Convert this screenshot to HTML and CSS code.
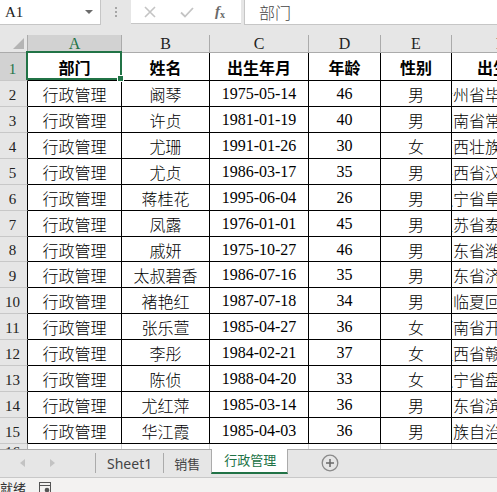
FILE: index.html
```html
<!DOCTYPE html>
<html lang="zh-CN">
<head>
<meta charset="utf-8">
<title>行政管理</title>
<link rel="stylesheet" href="styles.css">
</head>
<body>
<div class="app">
  <div class="formula-bar">
    <div class="namebox"><span class="ref">A1</span><span class="caret"></span></div>
    <div class="splitter"><i></i><i></i><i></i></div>
    <div class="fx-buttons">
      <svg class="btn" width="14" height="14" viewBox="0 0 14 14"><path d="M2 2 L12 12 M12 2 L2 12" stroke="#c4c4c4" stroke-width="1.6" fill="none"/></svg>
      <svg class="btn" width="16" height="14" viewBox="0 0 16 14"><path d="M2 7.5 L6 11.5 L14 3" stroke="#c4c4c4" stroke-width="1.8" fill="none"/></svg>
      <span class="fx"><i>f</i><sub>x</sub></span>
    </div>
    <div class="formula-input">部门</div>
  </div>

  <div class="sheet">
    <div class="grid">
      <div class="corner"><span class="tri"></span></div>
      <div class="colh sel">A</div>
      <div class="colh">B</div>
      <div class="colh">C</div>
      <div class="colh">D</div>
      <div class="colh">E</div>
      <div class="colh">F</div>

      <div class="rowh sel r1">1</div>
      <div class="c r1 b">部门</div><div class="c r1 b">姓名</div><div class="c r1 b">出生年月</div><div class="c r1 b">年龄</div><div class="c r1 b">性别</div><div class="c r1 b f"><span>出生地</span></div>

      <div class="rowh">2</div>
      <div class="c">行政管理</div><div class="c">阚琴</div><div class="c">1975-05-14</div><div class="c">46</div><div class="c">男</div><div class="c f"><span>贵州省毕节市大方</span></div>

      <div class="rowh">3</div>
      <div class="c">行政管理</div><div class="c">许贞</div><div class="c">1981-01-19</div><div class="c">40</div><div class="c">男</div><div class="c f"><span>湖南省常德市汉寿</span></div>

      <div class="rowh">4</div>
      <div class="c">行政管理</div><div class="c">尤珊</div><div class="c">1991-01-26</div><div class="c">30</div><div class="c">女</div><div class="c f"><span>广西壮族自治区南</span></div>

      <div class="rowh">5</div>
      <div class="c">行政管理</div><div class="c">尤贞</div><div class="c">1986-03-17</div><div class="c">35</div><div class="c">男</div><div class="c f"><span>陕西省汉中市南郑</span></div>

      <div class="rowh">6</div>
      <div class="c">行政管理</div><div class="c">蒋桂花</div><div class="c">1995-06-04</div><div class="c">26</div><div class="c">男</div><div class="c f"><span>辽宁省阜新市彰武</span></div>

      <div class="rowh">7</div>
      <div class="c">行政管理</div><div class="c">凤露</div><div class="c">1976-01-01</div><div class="c">45</div><div class="c">男</div><div class="c f"><span>江苏省泰州市兴化</span></div>

      <div class="rowh">8</div>
      <div class="c">行政管理</div><div class="c">戚妍</div><div class="c">1975-10-27</div><div class="c">46</div><div class="c">男</div><div class="c f"><span>山东省潍坊市寿光</span></div>

      <div class="rowh">9</div>
      <div class="c">行政管理</div><div class="c">太叔碧香</div><div class="c">1986-07-16</div><div class="c">35</div><div class="c">男</div><div class="c f"><span>山东省济南市历城</span></div>

      <div class="rowh">10</div>
      <div class="c">行政管理</div><div class="c">褚艳红</div><div class="c">1987-07-18</div><div class="c">34</div><div class="c">男</div><div class="c f"><span>甘肃省临夏回族自治州临夏</span></div>

      <div class="rowh">11</div>
      <div class="c">行政管理</div><div class="c">张乐萱</div><div class="c">1985-04-27</div><div class="c">36</div><div class="c">女</div><div class="c f"><span>河南省开封市杞县</span></div>

      <div class="rowh">12</div>
      <div class="c">行政管理</div><div class="c">李彤</div><div class="c">1984-02-21</div><div class="c">37</div><div class="c">女</div><div class="c f"><span>江西省赣州市瑞金</span></div>

      <div class="rowh">13</div>
      <div class="c">行政管理</div><div class="c">陈侦</div><div class="c">1988-04-20</div><div class="c">33</div><div class="c">女</div><div class="c f"><span>辽宁省盘锦市盘山</span></div>

      <div class="rowh">14</div>
      <div class="c">行政管理</div><div class="c">尤红萍</div><div class="c">1985-03-14</div><div class="c">36</div><div class="c">男</div><div class="c f"><span>山东省滨州市惠民</span></div>

      <div class="rowh">15</div>
      <div class="c">行政管理</div><div class="c">华江霞</div><div class="c">1985-04-03</div><div class="c">36</div><div class="c">男</div><div class="c f"><span>宁夏回族自治区银川市永宁</span></div>

      <div class="rowh empty">16</div>
      <div class="e"></div><div class="e"></div><div class="e"></div><div class="e"></div><div class="e"></div><div class="e"></div>
    </div>
    <div class="selection"><span class="handle"></span></div>
  </div>

  <div class="tabs">
    <div class="nav">
      <span class="arrow left"></span>
      <span class="arrow right"></span>
    </div>
    <div class="tab">Sheet1</div>
    <div class="tab cjk">销售</div>
    <div class="tab cjk active">行政管理</div>
    <div class="add">
      <svg width="18" height="18" viewBox="0 0 18 18"><circle cx="9" cy="9" r="7.8" fill="none" stroke="#8a8a8a" stroke-width="1.3"/><path d="M9 5 V13 M5 9 H13" stroke="#6a6a6a" stroke-width="1.5"/></svg>
    </div>
  </div>

  <div class="status">
    <span class="ready">就绪</span>
    <svg class="macro" width="14" height="14" viewBox="0 0 14 14"><rect x="1.5" y="1.5" width="11" height="11" fill="none" stroke="#555" stroke-width="1"/><path d="M1.5 4.5 H12.5" stroke="#555" stroke-width="1"/><circle cx="9" cy="9" r="2.3" fill="#555"/></svg>
  </div>
</div>
</body>
</html>
```

FILE: styles.css
```css
html, body {
  margin: 0;
  padding: 0;
  width: 497px;
  height: 492px;
  overflow: hidden;
  background: #e6e6e6;
}

.app {
  width: 497px;
  height: 492px;
  overflow: hidden;
  display: flex;
  flex-direction: column;
  font-family: "Liberation Serif", "Noto Sans CJK SC", serif;
}

/* ---------- formula bar ---------- */
.formula-bar {
  height: 35px;
  flex: none;
  display: flex;
  align-items: flex-start;
  background: #e6e6e6;
}

.namebox {
  width: 100px;
  height: 24px;
  background: #fff;
  border-right: 1px solid #c6c6c6;
  border-bottom: 1px solid #c6c6c6;
  display: flex;
  align-items: center;
  justify-content: space-between;
  box-sizing: content-box;
}

.namebox .ref {
  font-size: 15px;
  color: #222;
  padding-left: 5px;
  padding-top: 1px;
}

.namebox .caret {
  width: 0;
  height: 0;
  border-left: 4px solid transparent;
  border-right: 4px solid transparent;
  border-top: 4px solid #6b6b6b;
  margin-right: 7px;
}

.splitter {
  width: 30px;
  height: 24px;
  display: flex;
  flex-direction: column;
  align-items: center;
  justify-content: center;
  gap: 2px;
}

.splitter i {
  width: 2px;
  height: 2px;
  background: #a6a6a6;
}

.fx-buttons {
  width: 110px;
  height: 24px;
  background: #fff;
  border-bottom: 1px solid #c6c6c6;
  display: flex;
  align-items: center;
  padding-left: 12px;
  box-sizing: border-box;
}

.fx-buttons .btn {
  margin-right: 22px;
}

.fx {
  font-family: "Liberation Serif", serif;
  font-size: 15px;
  color: #6a6a6a;
  font-weight: 700;
  margin-left: -2px;
}

.fx sub {
  font-size: 10px;
  vertical-align: -2px;
}

.formula-input {
  flex: 1;
  height: 24px;
  margin-left: 3px;
  background: #fff;
  border-left: 1px solid #c6c6c6;
  border-bottom: 1px solid #c6c6c6;
  font-family: "Noto Sans CJK SC", sans-serif;
  font-weight: 300;
  font-size: 16px;
  color: #444;
  line-height: 24px;
  padding-left: 14px;
  box-sizing: content-box;
}

/* ---------- sheet ---------- */
.sheet {
  position: relative;
  height: 414px;
  flex: none;
  overflow: hidden;
  background: #fff;
}

.grid {
  display: grid;
  grid-template-columns: 28px 94px 88px 99px 72px 71px 98px;
  grid-template-rows: 18px 28px 26px 26px 26px 26px 26px 26px 25px 26px 26px 26px 26px 26px 26px 26px;
  width: 550px;
}

.corner {
  background: #e6e6e6;
  border-right: 1px solid #ababab;
  border-bottom: 1px solid #ababab;
  position: relative;
}

.corner .tri {
  position: absolute;
  right: 3px;
  bottom: 3px;
  width: 0;
  height: 0;
  border-left: 11px solid transparent;
  border-bottom: 11px solid #b4b4b4;
}

.colh {
  background: #e6e6e6;
  border-right: 1px solid #ababab;
  border-bottom: 1px solid #ababab;
  font-size: 16px;
  line-height: 17px;
  text-align: center;
  color: #222;
}

.colh.sel {
  background: #d2d2d2;
  color: #217346;
}

.rowh {
  background: #e6e6e6;
  border-right: 1px solid #000;
  border-bottom: 1px solid #c8c8c8;
  font-size: 15px;
  color: #222;
  display: flex;
  align-items: flex-end;
  justify-content: center;
  padding-bottom: 2px;
  padding-right: 2px;
  box-sizing: border-box;
}

.rowh.sel {
  background: #d2d2d2;
  color: #217346;
}

.rowh.empty {
  border-right-color: #ababab;
}

.c {
  border-right: 1px solid #000;
  border-bottom: 1px solid #000;
  display: flex;
  align-items: center;
  justify-content: center;
  font-size: 16px;
  font-weight: 300;
  color: #000;
  white-space: nowrap;
  overflow: hidden;
  padding-top: 1px;
  box-sizing: border-box;
}

.c.b {
  font-weight: 700;
}

.c.f {
  border-right: none;
}

.c.f span {
  flex: none;
}

.e {
  border-right: 1px solid #d4d4d4;
}

.selection {
  position: absolute;
  left: 26px;
  top: 16px;
  width: 96px;
  height: 29px;
  border: 2px solid #217346;
  box-sizing: border-box;
}

.selection .handle {
  position: absolute;
  right: -4px;
  bottom: -4px;
  width: 5px;
  height: 5px;
  background: #217346;
  border: 1px solid #fff;
}

/* ---------- sheet tabs ---------- */
.tabs {
  height: 28px;
  flex: none;
  display: flex;
  align-items: stretch;
  background: #e6e6e6;
  border-top: 1px solid #ababab;
  box-sizing: border-box;
  font-family: "Noto Sans", "Noto Sans CJK SC", sans-serif;
  font-size: 14px;
  color: #444;
}

.nav {
  width: 95px;
  display: flex;
  align-items: center;
  border-right: 1px solid #ababab;
  margin: 3px 0 4px;
}

.arrow {
  width: 0;
  height: 0;
  border-top: 4px solid transparent;
  border-bottom: 4px solid transparent;
}

.arrow.left {
  border-right: 5px solid #c3c3c3;
  margin-left: 20px;
}

.arrow.right {
  border-left: 5px solid #c3c3c3;
  margin-left: 25px;
}

.tab {
  display: flex;
  align-items: center;
  padding: 0 11px;
  margin: 3px 0 4px;
  border-right: 1px solid #ababab;
}

.tab.cjk {
  font-family: "Noto Sans CJK SC", sans-serif;
  font-size: 13px;
  padding: 0 11px 0 10px;
  border-right: none;
}

.tab.active {
  margin: -1px 0 0;
  padding: 0 11px 3px 12px;
  background: #fff;
  color: #217346;
  border-left: 1px solid #ababab;
  border-right: 1px solid #ababab;
  border-bottom: 2px solid #217346;
  height: 25px;
  box-sizing: border-box;
}

.add {
  display: flex;
  align-items: center;
  margin-left: 33px;
  padding-bottom: 2px;
}

/* ---------- status bar ---------- */
.status {
  flex: 1;
  background: #f3f2f1;
  border-top: 1px solid #c8c8c8;
  display: flex;
  align-items: flex-start;
  font-family: "Noto Sans CJK SC", sans-serif;
  font-size: 13px;
  color: #333;
}

.status .ready {
  line-height: 18px;
  margin-top: 1px;
}

.status .macro {
  margin-left: 12px;
  margin-top: 3px;
}
```
